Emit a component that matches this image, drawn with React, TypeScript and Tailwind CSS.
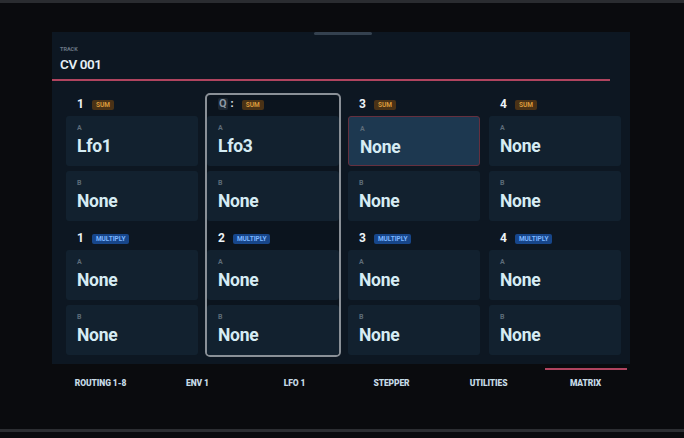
const FONT = { fontFamily: "Roboto, 'Open Sans', 'Liberation Sans', sans-serif" };

type Slot = { label: string; value: string; active?: boolean };
type Group = { num: string; mode: "SUM" | "MULTIPLY"; slots: Slot[] };

const columns: { selected?: boolean; groups: Group[] }[] = [
  {
    groups: [
      { num: "1", mode: "SUM", slots: [{ label: "A", value: "Lfo1" }, { label: "B", value: "None" }] },
      { num: "1", mode: "MULTIPLY", slots: [{ label: "A", value: "None" }, { label: "B", value: "None" }] },
    ],
  },
  {
    selected: true,
    groups: [
      { num: "Q", mode: "SUM", slots: [{ label: "A", value: "Lfo3" }, { label: "B", value: "None" }] },
      { num: "2", mode: "MULTIPLY", slots: [{ label: "A", value: "None" }, { label: "B", value: "None" }] },
    ],
  },
  {
    groups: [
      { num: "3", mode: "SUM", slots: [{ label: "A", value: "None", active: true }, { label: "B", value: "None" }] },
      { num: "3", mode: "MULTIPLY", slots: [{ label: "A", value: "None" }, { label: "B", value: "None" }] },
    ],
  },
  {
    groups: [
      { num: "4", mode: "SUM", slots: [{ label: "A", value: "None" }, { label: "B", value: "None" }] },
      { num: "4", mode: "MULTIPLY", slots: [{ label: "A", value: "None" }, { label: "B", value: "None" }] },
    ],
  },
];

const tabs = ["ROUTING 1-8", "ENV 1", "LFO 1", "STEPPER", "UTILITIES", "MATRIX"];

function Badge({ mode }: { mode: Group["mode"] }) {
  return mode === "SUM" ? (
    <span className="rounded-[2px] bg-[#4a3216] px-[4px] text-[6.5px] font-bold leading-[10px] text-[#d99a3c]">SUM</span>
  ) : (
    <span className="rounded-[2px] bg-[#17468a] px-[4px] text-[6.5px] font-bold leading-[10px] text-[#7cb6ff]">MULTIPLY</span>
  );
}

function Header({ g, first }: { g: Group; first: boolean }) {
  return (
    <div className={`flex items-end gap-[8px] px-[11px] ${first ? "h-[21px] pb-[6px]" : "h-[29px] pb-[6px]"}`}>
      {g.num === "Q" ? (
        <span className="flex items-center gap-[3px] text-[11px] font-bold leading-[12px] text-[#8c98a4]">
          <span className="rounded-[2px] bg-[#1c2733] px-[1px]">Q</span>
          <span className="text-[#e0e8ee]">:</span>
        </span>
      ) : (
        <span className="text-[12px] font-bold leading-[12px] text-[#eef4f8]">{g.num}</span>
      )}
      <Badge mode={g.mode} />
    </div>
  );
}

function Cell({ s }: { s: Slot }) {
  return (
    <div
      className={`h-[50px] rounded-[3px] px-[11px] pt-[8px] ${
        s.active ? "border border-[#65303f] bg-[#1d3850] px-[10px] pt-[7px]" : "bg-[#12212f]"
      }`}
    >
      <div className="text-[7px] font-bold leading-[9px] text-[#5d6c79]">{s.label}</div>
      <div className="mt-[3px] text-[17.5px] font-bold leading-[21px] tracking-[-0.3px] text-[#d6ecf4]">{s.value}</div>
    </div>
  );
}

export default function App() {
  return (
    <div style={FONT} className="relative h-[438px] w-[684px] overflow-hidden bg-[#0a0b0e]">
      {/* bezel edges */}
      <div className="absolute inset-x-0 top-0 h-[3px] bg-[#2a2c30]" />
      <div className="absolute inset-x-0 bottom-[6px] h-[3px] bg-[#2c2e32]" />

      <div className="pl-[52px] pt-[32px]">
        {/* screen panel */}
        <div className="relative h-[332px] w-[578px] bg-[#0d1722]">
          <div className="absolute left-[262px] top-[0px] h-[3px] w-[58px] rounded-full bg-[#34414f]" />

          <div className="px-[8px] pt-[14px]">
            <div className="text-[5.5px] font-bold leading-[7px] text-[#6b7886]">TRACK</div>
            <div className="mt-[3px] text-[13.5px] font-semibold leading-[16px] tracking-[-0.4px] text-[#e6eef4]">CV 001</div>
          </div>
          <div className="mt-[7px] h-[2px] w-[558px] bg-[#b0445f]" />

          <div className="ml-[12px] mt-[12px] flex gap-[5px]">
            {columns.map((col, ci) => (
              <div
                key={ci}
                className={`w-[136px] rounded-[5px] border-2 ${
                  col.selected ? "border-[#8a9097] bg-[#0b141e]" : "border-transparent"
                }`}
              >
                {col.groups.map((g, gi) => (
                  <div key={gi}>
                    <Header g={g} first={gi === 0} />
                    <div className="flex flex-col gap-[5px]">
                      {g.slots.map((s, si) => (
                        <Cell key={si} s={s} />
                      ))}
                    </div>
                  </div>
                ))}
              </div>
            ))}
          </div>
        </div>

        {/* tab bar */}
        <div className="flex w-[582px]">
          {tabs.map((t, i) => (
            <div key={t} className="flex w-[97px] flex-col items-center">
              <div className={`mt-[4px] h-[2px] w-[82px] ${i === 5 ? "bg-[#b0445f]" : "bg-transparent"}`} />
              <div className="mt-[8px] text-[8.5px] font-black leading-[10px] tracking-[-0.1px] text-[#c6dae6]">{t}</div>
            </div>
          ))}
        </div>
      </div>
    </div>
  );
}
